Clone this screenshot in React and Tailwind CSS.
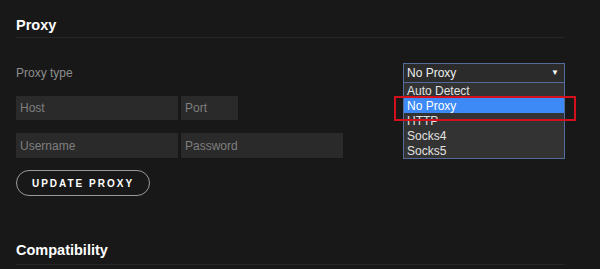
import React from 'react';

const options = ['Auto Detect', 'No Proxy', 'HTTP', 'Socks4', 'Socks5'];

const Field = ({ placeholder, width, height }) => (
  <div
    className={`${width} ${height} bg-[#2a2a2a] flex items-center pl-[4px] text-[12px] text-[#7f7f7f]`}
  >
    {placeholder}
  </div>
);

const App = () => {
  const selected = 'No Proxy';

  return (
    <div
      className="relative w-[600px] h-[269px] overflow-hidden bg-[#181818] px-4"
      style={{ fontFamily: '"Liberation Sans", Arial, sans-serif' }}
    >
      <div className="w-[549px]">
        {/* Proxy header */}
        <div className="pt-[16px] pb-[3px] border-b border-[#262626]">
          <h2 className="text-[14.5px] leading-[18px] font-bold text-white">Proxy</h2>
        </div>

        {/* Proxy type */}
        <div className="mt-[25px] h-[20px] flex items-center justify-between">
          <span className="text-[12px] text-[#8f8f8f]">Proxy type</span>
          <div className="relative w-[162px] h-[20px]">
            <div className="h-full flex items-center justify-between pl-[3px] pr-[5px] bg-[#2b2b2b] border border-[#536b99] text-[12px] text-[#eeeeee]">
              <span>{selected}</span>
              <span className="text-[8px] text-white">▼</span>
            </div>
            <ul className="absolute left-0 top-full w-full bg-[#333333] border border-t-0 border-[#536b99] z-10">
              {options.map((opt) => (
                <li
                  key={opt}
                  className={`h-[15px] flex items-center pl-[3px] text-[12px] leading-none ${
                    opt === selected ? 'bg-[#3d8af7] text-white' : 'text-[#e2e2e2]'
                  }`}
                >
                  {opt}
                </li>
              ))}
            </ul>
          </div>
        </div>

        {/* Host / Port */}
        <div className="mt-[13px] flex gap-[3px]">
          <Field placeholder="Host" width="w-[162px]" height="h-[24px]" />
          <Field placeholder="Port" width="w-[57px]" height="h-[24px]" />
        </div>

        {/* Username / Password */}
        <div className="mt-[13px] flex gap-[3px]">
          <Field placeholder="Username" width="w-[162px]" height="h-[25px]" />
          <Field placeholder="Password" width="w-[162px]" height="h-[25px]" />
        </div>

        <button className="mt-[12px] w-[134px] h-[26px] rounded-full border border-[#9a9a9a] text-[10px] font-bold tracking-[2px] text-white flex items-center justify-center">
          UPDATE PROXY
        </button>

        {/* Compatibility */}
        <div className="mt-[45px] pb-[5px] border-b border-[#262626]">
          <h2 className="text-[14.5px] leading-[18px] font-bold text-white">Compatibility</h2>
        </div>
      </div>

      {/* highlight annotation */}
      <div className="absolute left-[394px] top-[96px] w-[182px] h-[25px] border-2 border-[#d3101c] z-20 pointer-events-none" />
    </div>
  );
};

export default App;
